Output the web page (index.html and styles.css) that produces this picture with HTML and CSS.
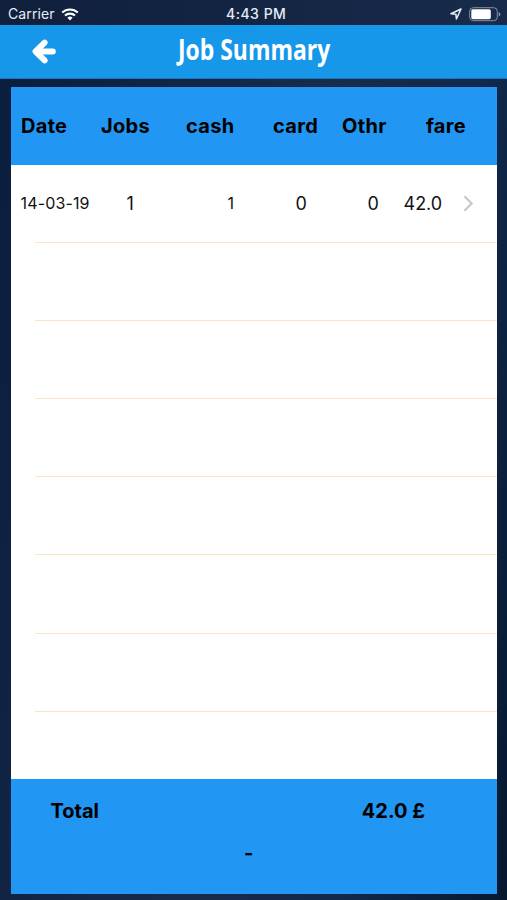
FILE: index.html
```html
<!DOCTYPE html>
<html lang="en">
<head>
  <title>Job Summary</title>
  <meta charset="UTF-8">
  <meta name="viewport" content="width=device-width, initial-scale=1">
  <link rel="stylesheet" href="styles.css">
</head>
<body>
  <div class="status-bar">
    <span class="carrier">Carrier</span>
    <svg class="wifi" width="18" height="13" viewBox="0 0 18 13" fill="none" stroke="#fff" stroke-width="2.1">
      <path d="M1.2 4.6a11.2 11.2 0 0 1 15.6 0"/>
      <path d="M4 7.6a7.2 7.2 0 0 1 10 0"/>
      <path d="M6.4 9.7a3.8 3.8 0 0 1 5.2 0L9 12.4z" fill="#fff" stroke="none"/>
    </svg>
    <span class="time">4:43 PM</span>
    <svg class="location" width="12" height="12" viewBox="0 0 12 12" fill="none" stroke="#e8edf5" stroke-width="1.5" stroke-linejoin="round">
      <path d="M11 1L1 5.8l4.9.4.5 4.8z"/>
    </svg>
    <svg class="battery" width="32" height="15" viewBox="0 0 32 15">
      <rect x="0.7" y="0.7" width="27.6" height="13" rx="3.6" fill="none" stroke="#8791a5" stroke-width="1"/>
      <rect x="2.3" y="2.2" width="19.5" height="10" rx="1.6" fill="#fff"/>
      <path d="M29.7 5v4.6q1.7-.7 1.7-2.3T29.7 5z" fill="#8791a5"/>
    </svg>
  </div>

  <div class="nav-bar">
    <svg class="back" width="24" height="25" viewBox="0 0 24 25" fill="none" stroke="#fff" stroke-width="6" stroke-linejoin="round">
      <path d="M12.6 3.6L3.6 12.5l9 8.9" stroke-linecap="round"/>
      <path d="M5 12.5h15.8" stroke-linecap="round"/>
    </svg>
    <h1 class="title">Job Summary</h1>
  </div>

  <div class="panel">
    <div class="table-head">
      <span>Date</span>
      <span>Jobs</span>
      <span>cash</span>
      <span>card</span>
      <span>Othr</span>
      <span>fare</span>
    </div>

    <div class="rows">
      <div class="row">
        <span class="date">14-03-19</span>
        <span>1</span>
        <span class="cash">1</span>
        <span>0</span>
        <span>0</span>
        <span>42.0</span>
        <svg width="11" height="17" viewBox="0 0 11 17" fill="none" stroke="#c6c6ca" stroke-width="2.1">
          <path d="M1.4 1.2l7.3 7.3-7.3 7.3"/>
        </svg>
      </div>
      <div class="row"></div>
      <div class="row"></div>
      <div class="row"></div>
      <div class="row"></div>
      <div class="row"></div>
      <div class="row"></div>
    </div>

    <div class="total">
      <div class="total-line">
        <span class="total-label">Total</span>
        <span class="total-value">42.0 £</span>
      </div>
      <div class="total-note">-</div>
    </div>
  </div>
</body>
</html>
```

FILE: styles.css
```css
* {
  box-sizing: border-box;
}
body {
  margin: 0;
  height: 900px;
  overflow: hidden;
  font-family: Inter, "Liberation Sans", sans-serif;
  color: #000;
  background: linear-gradient(100deg, #0b1d3c 0%, #192b4b 50%, #12294b 75%, #07182f 100%);
}

/* status bar */
.status-bar {
  display: flex;
  align-items: center;
  height: 25px;
  padding: 3px 6px 0 8px;
  background: linear-gradient(90deg, #0f1f3c, #192b4b);
  color: #e8edf5;
  font-size: 14px;
  line-height: 22px;
}
.carrier {
  width: 53px;
  letter-spacing: 0.1px;
}
.time {
  margin-left: 147px;
  width: 224px;
  font-weight: 500;
  font-size: 14px;
  letter-spacing: 0.5px;
}
.battery {
  margin-left: 7px;
}

/* nav bar */
.nav-bar {
  display: flex;
  align-items: center;
  height: 54px;
  padding-left: 32px;
  background: #1797e9;
  border-bottom: 1px solid #1579bf;
}
.title {
  margin: 0 0 5px 121.5px;
  color: #fff;
  font-family: "Open Sans", sans-serif;
  font-size: 29px;
  font-weight: 700;
  line-height: 40px;
  white-space: nowrap;
  transform: scaleX(0.79);
  transform-origin: left center;
}

/* table */
.panel {
  width: 486.5px;
  margin: 7.5px 0 0 10.5px;
  background: #fff;
}
.table-head {
  display: grid;
  grid-template-columns: 80px 85px 87px 69px 84px 1fr;
  align-items: center;
  height: 78px;
  padding-left: 10.5px;
  background: #2196f3;
  font-size: 20px;
  font-weight: 650;
  letter-spacing: 0.3px;
}
.rows {
  height: 614.5px;
}
.row {
  display: grid;
  grid-template-columns: 91.5px 101px 68px 72px 36px 59px 1fr;
  align-items: center;
  height: 78.2px;
  margin-left: 24.5px;
  border-bottom: 1.5px solid #fae6c0;
  color: #111;
  font-size: 18px;
}
.row .date {
  margin-left: -14.5px;
  font-size: 16px;
  letter-spacing: 0.15px;
}
.row .cash {
  font-size: 16px;
}

/* total */
.total {
  height: 115px;
  padding-top: 18px;
  background: #2196f3;
  font-size: 20px;
  font-weight: 650;
  line-height: 28px;
}
.total-line {
  display: flex;
  justify-content: space-between;
  padding: 0 72px 0 40px;
}
.total-note {
  margin-top: 14px;
  padding-right: 10px;
  text-align: center;
}
```
